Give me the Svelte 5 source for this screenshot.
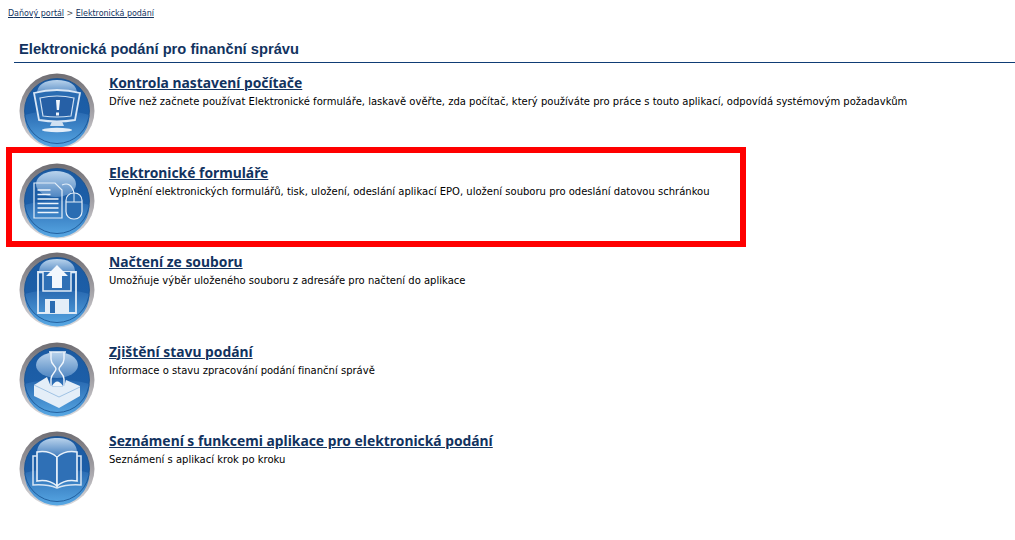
<script lang="ts">
  const items = [
    { icon: 'monitor', title: 'Kontrola nastavení počítače', desc: 'Dříve než začnete používat Elektronické formuláře, laskavě ověřte, zda počítač, který používáte pro práce s touto aplikací, odpovídá systémovým požadavkům', marked: false },
    { icon: 'form', title: 'Elektronické formuláře', desc: 'Vyplnění elektronických formulářů, tisk, uložení, odeslání aplikací EPO, uložení souboru pro odeslání datovou schránkou', marked: true },
    { icon: 'floppy', title: 'Načtení ze souboru', desc: 'Umožňuje výběr uloženého souboru z adresáře pro načtení do aplikace', marked: false },
    { icon: 'hourglass', title: 'Zjištění stavu podání', desc: 'Informace o stavu zpracování podání finanční správě', marked: false },
    { icon: 'book', title: 'Seznámení s funkcemi aplikace pro elektronická podání', desc: 'Seznámení s aplikací krok po kroku', marked: false },
  ];
</script>

<svg class="defs" width="0" height="0" aria-hidden="true">
  <defs>
    <linearGradient id="ring" x1="0" y1="0" x2="0" y2="1">
      <stop offset="0" stop-color="#6f6d72" />
      <stop offset="0.5" stop-color="#a3a1a6" />
      <stop offset="1" stop-color="#dcdbde" />
    </linearGradient>
    <linearGradient id="ball" x1="0" y1="0" x2="0" y2="1">
      <stop offset="0" stop-color="#1a5aa2" />
      <stop offset="1" stop-color="#1f62ac" />
    </linearGradient>
    <linearGradient id="lower" x1="0" y1="0" x2="0" y2="1">
      <stop offset="0" stop-color="#2868b0" />
      <stop offset="1" stop-color="#58a8e4" />
    </linearGradient>
    <linearGradient id="gloss" x1="0" y1="0" x2="0" y2="1">
      <stop offset="0" stop-color="#b9d3ec" />
      <stop offset="1" stop-color="#4f86c2" />
    </linearGradient>
  </defs>
</svg>

<main class="page">
  <nav class="crumbs"><a href="#p">Daňový portál</a> <span>&gt;</span> <a href="#e">Elektronická podání</a></nav>
  <h1>Elektronická podání pro finanční správu</h1>

  <ul class="list">
    {#each items as item}
      <li class="row">
        <svg class="orb" viewBox="0 0 76 76" width="76" height="76">
          <circle cx="38" cy="38" r="37.500" fill="url(#ring)" />
          <circle cx="38" cy="38" r="32.500" fill="url(#ball)" />
          <path d="M5.500 42q32.500-9 65 0A32.500 32.500 0 0 1 5.500 42z" fill="url(#lower)" />
          <circle cx="38" cy="38" r="32.500" fill="none" stroke="#17508f" stroke-width="0.800" />

          {#if item.icon === 'monitor'}
            <path d="M18 22C17 12 26 7 38 7s21 5 20 15z" fill="url(#gloss)" />
            <path d="M15 20q23-6 46 0l-5 27q-18 3-36 0z" fill="#2a6cb2" stroke="#d9e7f6" stroke-width="1.800" />
            <path d="M21 25q17-4 34 0l-3 18q-14 2-28 0z" fill="#2660a6" stroke="#cfe0f2" stroke-width="1.200" />
            <path d="M37 27h4l-1 10h-2.200zM37 39.500h3v3h-3z" fill="#f2f7fd" />
            <path d="M33 48.500h10l2 4.500H31z" fill="#cfe0f2" />
            <ellipse cx="38" cy="57" rx="15" ry="2.200" fill="#e2edf8" />
          {:else if item.icon === 'form'}
            <ellipse cx="37" cy="21" rx="20" ry="13" fill="url(#gloss)" />
            <path d="M15 20h21l7 7v28H15z" fill="none" stroke="#e4eef8" stroke-width="1.200" />
            <path d="M18.500 27h13M18.500 31.500h13M18.500 36h21M18.500 40.500h21M18.500 45h21M18.500 49.500h21" stroke="#eef5fc" stroke-width="1.500" fill="none" />
            <path d="M43 22q9-4 12 8" fill="none" stroke="#e4eef8" stroke-width="1.200" />
            <rect x="47" y="30" width="16" height="26" rx="7.500" fill="#2a6cb2" stroke="#e4eef8" stroke-width="1.200" />
            <path d="M47 39h16M55 30v9" stroke="#e4eef8" stroke-width="1" />
          {:else if item.icon === 'floppy'}
            <path d="M20 22C19 11 27 7 38 7s19 4 18 15z" fill="url(#gloss)" />
            <path d="M19 20h38v41H19z" fill="none" stroke="#dfeaf6" stroke-width="1.800" />
            <path d="M24 20v19h28V20" fill="#2f70b6" stroke="#dfeaf6" stroke-width="1.500" />
            <path d="M38 13l11 11h-6v12H33V24H27z" fill="#f2f7fd" />
            <path d="M26 47h24v14H26z" fill="#e4eef8" />
            <path d="M31 49h5v12h-5z" fill="#2a6cb2" />
          {:else if item.icon === 'hourglass'}
            <ellipse cx="38" cy="23" rx="21" ry="13" fill="url(#gloss)" />
            <path d="M30 10h17M30 45h17M32 10v7c0 6 5 7 5 10s-5 5-5 10v8M45 10v7c0 6-5 7-5 10s5 5 5 10v8" fill="none" stroke="#f0f6fc" stroke-width="1.400" />
            <path d="M33 44q5-9 11 0z" fill="#f0f6fc" />
            <path d="M15 43l13-8 4 10h13l2-7 14 6v10L40 66 15 54z" fill="#e4eef8" />
            <path d="M15 43l25 12 21-10" fill="none" stroke="#9fc2e4" stroke-width="1" />
          {:else}
            <path d="M18 24C17 12 26 7 38 7s21 5 20 17z" fill="url(#gloss)" />
            <path d="M38 26q-8-7-20-5v29q12-2 20 5z" fill="#2f70b6" stroke="#e8f1fa" stroke-width="1.600" />
            <path d="M38 26q8-7 20-5v29q-12-2-20 5z" fill="#2f70b6" stroke="#e8f1fa" stroke-width="1.600" />
            <path d="M18 25h-4v29q14-1 24 3 10-4 24-3V25h-4" fill="none" stroke="#d5e4f3" stroke-width="1.500" />
          {/if}
        </svg>
        <div class="text">
          <a class="title" href="#i">{item.title}</a>
          <p>{item.desc}</p>
        </div>
        {#if item.marked}
          <div class="mark"></div>
        {/if}
      </li>
    {/each}
  </ul>
</main>

<style>
  :global(body) {
    margin: 0;
    background: #fff;
  }
  .defs {
    position: absolute;
  }
  .page {
    padding: 8px 0 0 8px;
    font-family: Tahoma, "DejaVu Sans", sans-serif;
    color: #000;
  }
  .crumbs {
    font-size: 8px;
    line-height: 11px;
    color: #555;
  }
  .crumbs a {
    color: #12335f;
    letter-spacing: -0.04px;
  }
  h1 {
    margin: 20px 0 0 6px;
    padding: 0 0 3px 5px;
    height: 20px;
    font: bold 14.700px/20px "Liberation Sans", Arial, sans-serif;
    color: #12335f;
    border-bottom: 1px solid #0f3d75;
  }
  .list {
    list-style: none;
    margin: 9px 0 0;
    padding: 0;
  }
  .row {
    position: relative;
    display: flex;
    height: 89.500px;
    padding-left: 11px;
    box-sizing: border-box;
  }
  .orb {
    flex: none;
    margin-top: 1px;
  }
  .text {
    margin-left: 14px;
    padding-top: 1px;
  }
  .title {
    display: inline-block;
    font: bold 13.850px/18px "Noto Sans", sans-serif;
    color: #12335f;
  }
  p {
    margin: 3px 0 0;
    font-size: 10px;
    line-height: 14px;
    white-space: nowrap;
    letter-spacing: 0.01px;
  }
  .mark {
    position: absolute;
    left: -2px;
    top: -14.500px;
    width: 728px;
    height: 88px;
    border: 6px solid #f00;
  }
</style>
